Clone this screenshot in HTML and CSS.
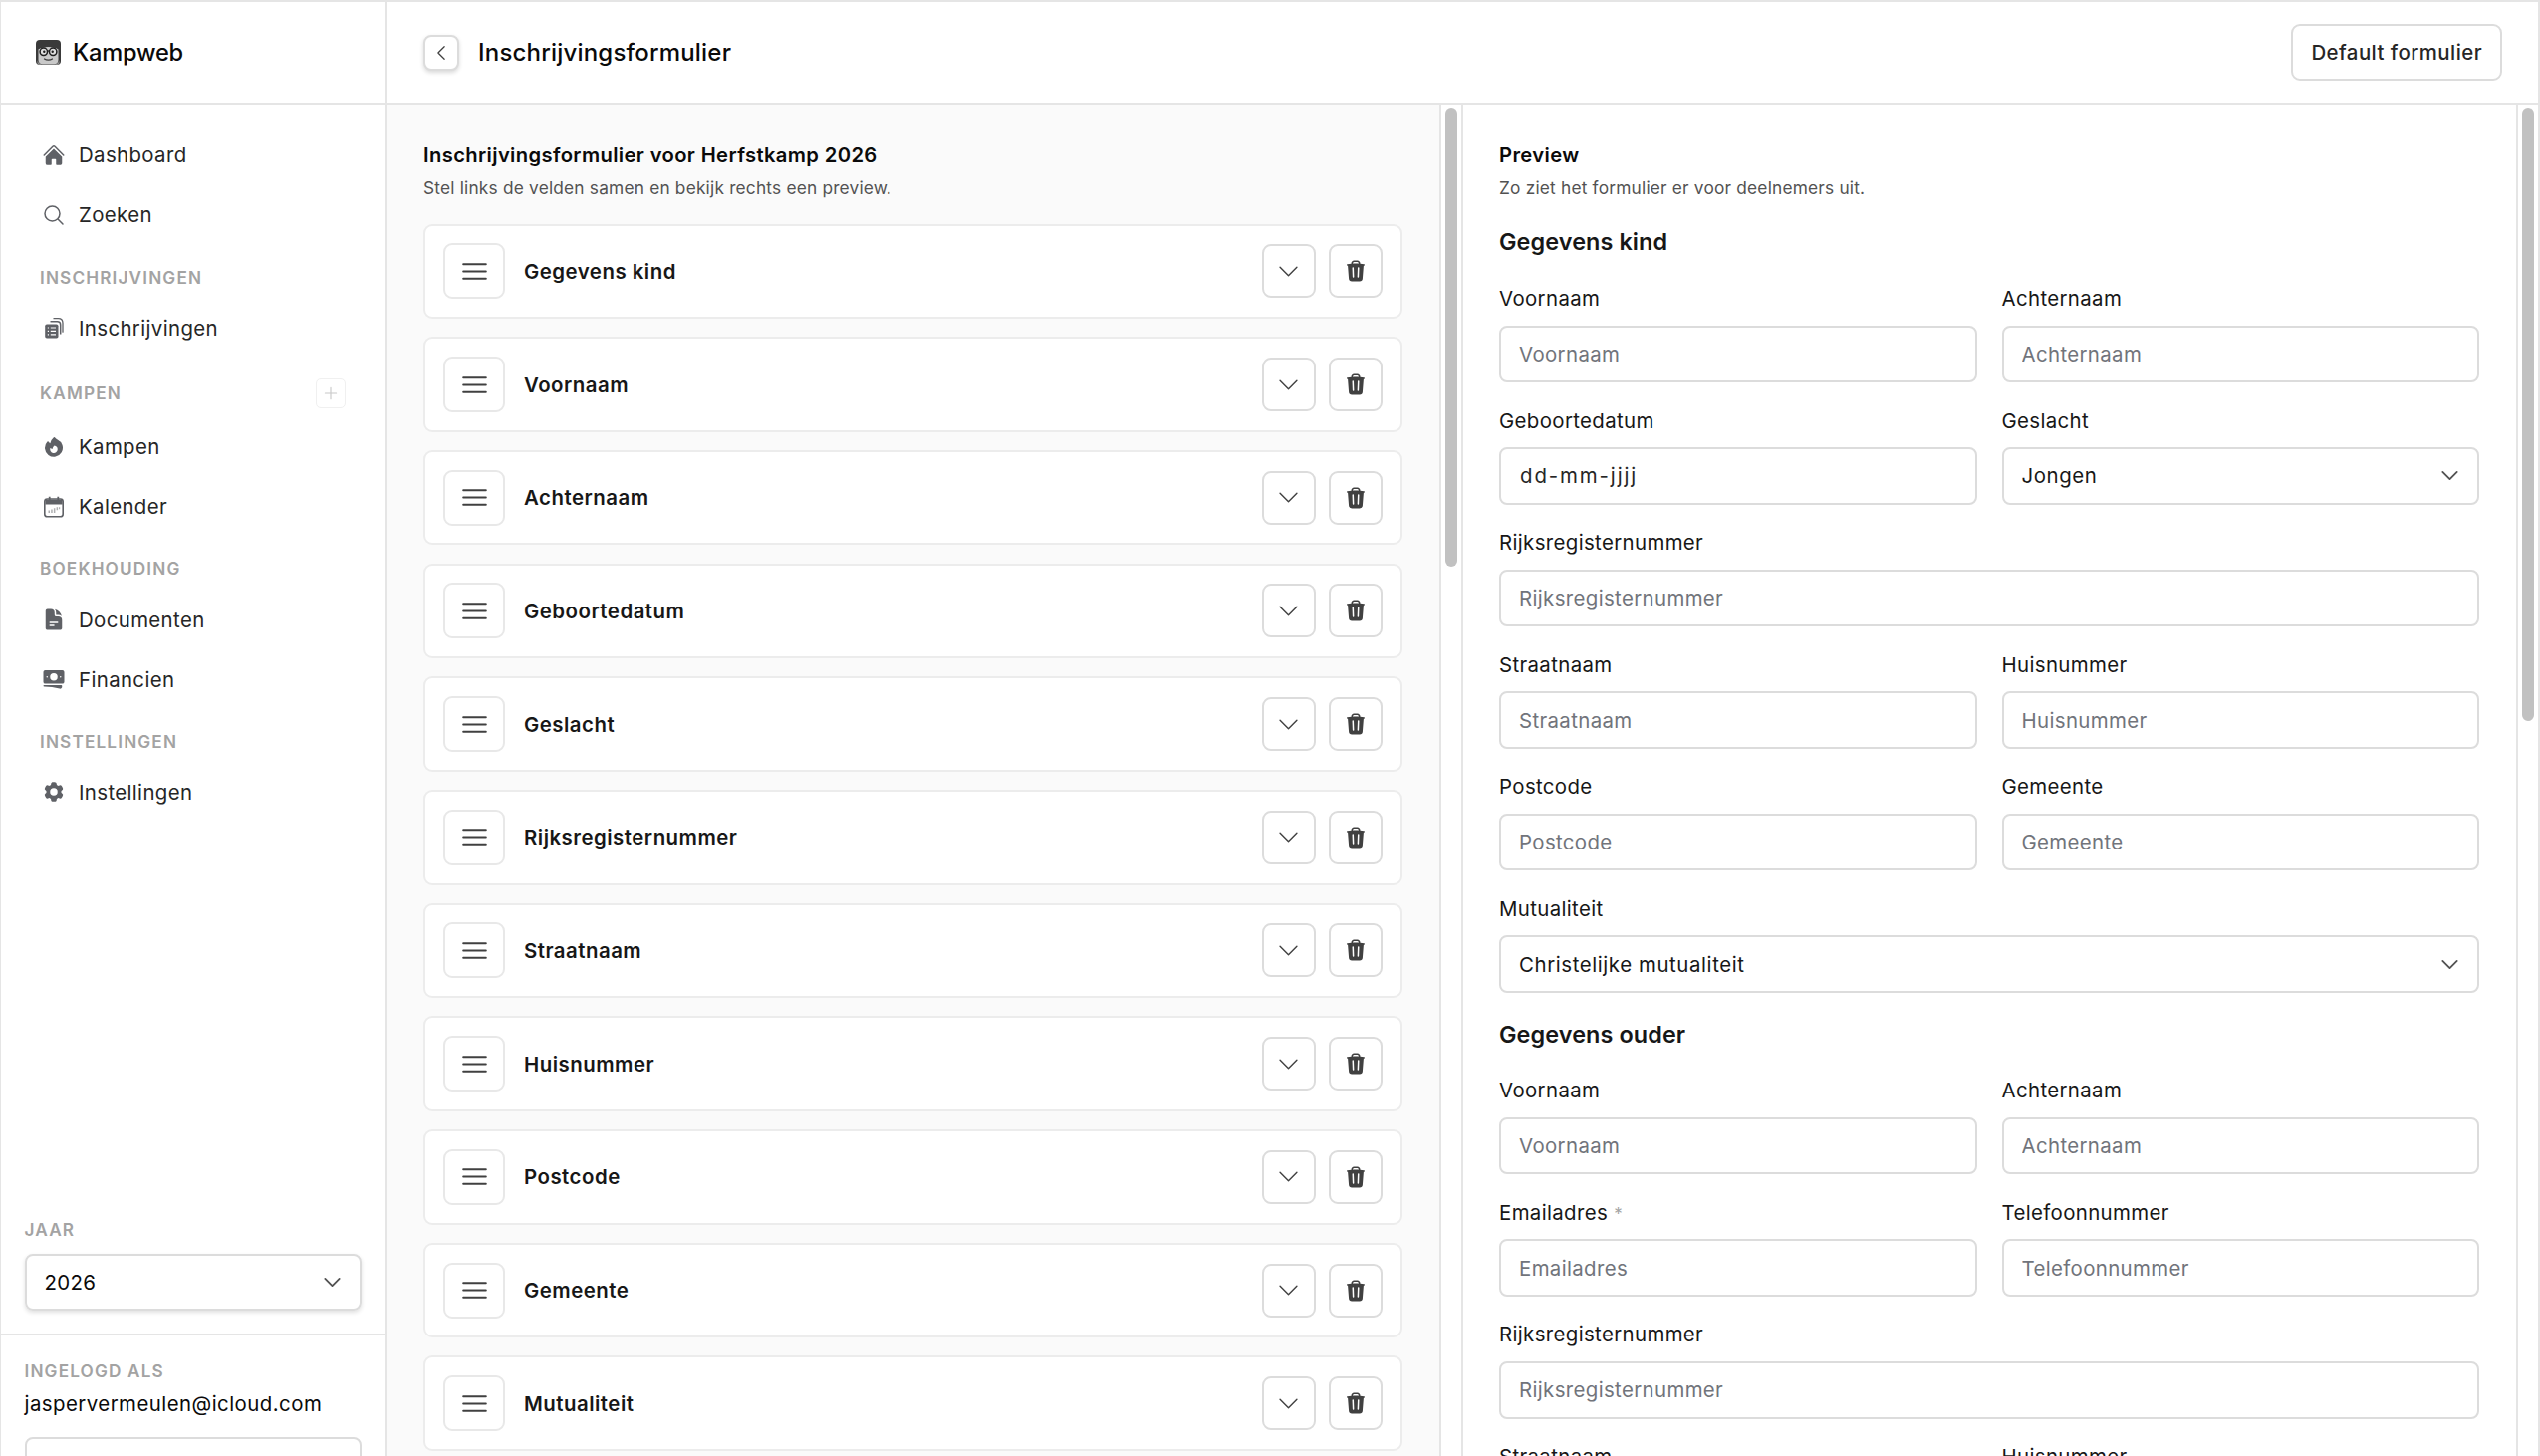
FILE: index.html
```html
<!DOCTYPE html>
<html lang="nl">
<head>
<meta charset="utf-8">
<title>Kampweb – Inschrijvingsformulier</title>
<link rel="stylesheet" href="styles.css">
</head>
<body>
<svg class="sprites" aria-hidden="true">
  <symbol id="i-chev-down" viewBox="0 0 24 24"><path d="m4.5 8.25 7.5 7.5 7.5-7.5" fill="none" stroke="currentColor" stroke-linecap="round" stroke-linejoin="round"/></symbol>
  <symbol id="i-trash" viewBox="0 0 24 24"><path fill="currentColor" fill-rule="evenodd" d="M16.5 4.478v.227a48.816 48.816 0 0 1 3.878.512.75.75 0 1 1-.256 1.478l-.209-.035-1.005 13.07a3 3 0 0 1-2.991 2.77H8.084a3 3 0 0 1-2.991-2.77L4.087 6.66l-.209.035a.75.75 0 0 1-.256-1.478A48.567 48.567 0 0 1 7.5 4.705v-.227c0-1.564 1.213-2.9 2.816-2.951a52.662 52.662 0 0 1 3.369 0c1.603.051 2.815 1.387 2.815 2.951Zm-6.136-1.452a51.196 51.196 0 0 1 3.273 0C14.39 3.05 15 3.684 15 4.478v.113a49.488 49.488 0 0 0-6 0v-.113c0-.794.609-1.428 1.364-1.452Zm-.355 5.945a.75.75 0 1 0-1.5.058l.347 9a.75.75 0 1 0 1.499-.058l-.346-9Zm5.48.058a.75.75 0 1 0-1.498-.058l-.347 9a.75.75 0 0 0 1.5.058l.345-9Z"/></symbol>
  <symbol id="i-bars" viewBox="0 0 24 24"><path d="M3.75 6.75h16.5M3.75 12h16.5M3.75 17.25h16.5" fill="none" stroke="currentColor" stroke-width="1.4" stroke-linecap="round"/></symbol>
</svg>
<div class="app">
  <aside class="sidebar">
    <div class="brand">
      <svg class="logo" viewBox="0 0 25 25" aria-hidden="true">
        <rect width="25" height="25" rx="4" fill="#3a3a3a"/>
        <path d="M2.5 9.5c2-1.500 5-2.400 10-2.400s8 .9 10 2.400v10.500c0 2.500-1.500 4-4 4.500h-12c-2.500-.5-4-2-4-4.500Z" fill="#c9c9c9"/>
        <path d="M1.500 20c.6 2.600 2 4 4.500 4.600h13c2.500-.6 3.900-2 4.500-4.600v3a2 2 0 0 1-2 2H3.500a2 2 0 0 1-2-2Z" fill="#8f8f8f"/>
        <circle cx="7.800" cy="11.800" r="3.700" fill="#dedede" stroke="#1f1f1f" stroke-width="1.500"/>
        <circle cx="17.200" cy="11.800" r="3.700" fill="#dedede" stroke="#1f1f1f" stroke-width="1.500"/>
        <path d="M11.400 11h2.200" stroke="#1f1f1f" stroke-width="1.300"/>
        <circle cx="8.300" cy="11.800" r="1.200" fill="#1f1f1f"/>
        <circle cx="16.700" cy="11.800" r="1.200" fill="#1f1f1f"/>
        <path d="M8.500 19c2 1.500 6 1.500 8 0" fill="none" stroke="#3a3a3a" stroke-width="1.200" stroke-linecap="round"/>
      </svg>
      <span class="brand-name">Kampweb</span>
    </div>
    <nav class="nav">
      <a class="nav-item">
        <svg class="nav-icon" viewBox="0 0 24 24"><path fill="currentColor" d="M11.47 3.841a.75.75 0 0 1 1.06 0l8.69 8.69a.75.75 0 1 0 1.06-1.061l-8.689-8.69a2.25 2.25 0 0 0-3.182 0l-8.69 8.69a.75.75 0 1 0 1.061 1.06l8.69-8.689Z"/><path fill="currentColor" d="m12 5.432 8.159 8.159c.03.03.06.058.091.086v6.198c0 1.035-.84 1.875-1.875 1.875H15a.75.75 0 0 1-.75-.75v-4.5a.75.75 0 0 0-.75-.75h-3a.75.75 0 0 0-.75.75V21a.75.75 0 0 1-.75.75H5.625a1.875 1.875 0 0 1-1.875-1.875v-6.198a2.29 2.29 0 0 0 .091-.086L12 5.432Z"/></svg>
        <span>Dashboard</span>
      </a>
      <a class="nav-item">
        <svg class="nav-icon" viewBox="0 0 24 24"><path d="m21 21-5.197-5.197m0 0A7.5 7.5 0 1 0 5.196 5.196a7.5 7.5 0 0 0 10.607 10.607Z" fill="none" stroke="currentColor" stroke-width="1.5" stroke-linecap="round" stroke-linejoin="round"/></svg>
        <span>Zoeken</span>
      </a>
      <div class="nav-label label-first">Inschrijvingen</div>
      <a class="nav-item">
        <svg class="nav-icon" viewBox="0 0 24 24"><path fill="none" stroke="currentColor" stroke-width="1.300" stroke-linecap="round" d="M12 2.700h4.500c2.700 0 4.500 1.800 4.500 4.500v9"/><path fill="none" stroke="currentColor" stroke-width="1.500" d="M8.500 5.800h7c2 0 3.200 1.200 3.200 3.200v9.500"/><rect x="3.200" y="8.500" width="13.300" height="14" rx="1.800" fill="currentColor"/><path d="M5.800 12h1.200M8.800 12h5.200M5.800 15.400h1.200M8.800 15.400h5.200M5.800 18.800h1.200M8.800 18.800h5.200" stroke="#fff" stroke-width="1.200"/></svg>
        <span>Inschrijvingen</span>
      </a>
      <div class="nav-label label-row">
        <span>Kampen</span>
        <span class="add-btn"><svg viewBox="0 0 24 24"><path d="M12 4.5v15m7.5-7.5h-15" fill="none" stroke="currentColor" stroke-width="1.5" stroke-linecap="round"/></svg></span>
      </div>
      <a class="nav-item">
        <svg class="nav-icon" viewBox="0 0 24 24"><path fill="currentColor" fill-rule="evenodd" d="M12.963 2.286a.75.75 0 0 0-1.071-.136 9.742 9.742 0 0 0-3.539 6.176 7.547 7.547 0 0 1-1.705-1.715.75.75 0 0 0-1.152-.082A9 9 0 1 0 15.68 4.534a7.46 7.46 0 0 1-2.717-2.248ZM15.750 14.250a3.750 3.750 0 1 1-7.313-1.172c.628.465 1.350.810 2.133 1a5.990 5.990 0 0 1 1.925-3.546 3.750 3.750 0 0 1 3.255 3.718Z"/></svg>
        <span>Kampen</span>
      </a>
      <a class="nav-item">
        <svg class="nav-icon" viewBox="0 0 24 24"><path fill="currentColor" d="M6.800 1.800h1.800v3.500H6.800zM15.400 1.800h1.800v3.500h-1.800z"/><rect x="2.800" y="4" width="18.400" height="17.800" rx="2.600" fill="none" stroke="currentColor" stroke-width="1.600"/><path fill="currentColor" d="M3.400 4.600h17.200V9.500H3.400z"/><path fill="currentColor" opacity=".5" d="M6.500 15.500h1.500v2.500H6.500zM9.200 14.500h1.500v3.500H9.200zM11.900 13.200h1.500v4.800h-1.500zM14.600 12.200h1.500v3h-1.500zM17 12.200h1.200v2H17z"/></svg>
        <span>Kalender</span>
      </a>
      <div class="nav-label">Boekhouding</div>
      <a class="nav-item">
        <svg class="nav-icon" viewBox="0 0 24 24"><path fill="currentColor" fill-rule="evenodd" d="M5.625 1.500c-1.036 0-1.875.840-1.875 1.875v17.250c0 1.035.840 1.875 1.875 1.875h12.750c1.035 0 1.875-.840 1.875-1.875V12.750A3.750 3.750 0 0 0 16.500 9h-1.875a1.875 1.875 0 0 1-1.875-1.875V5.250A3.750 3.750 0 0 0 9 1.500H5.625ZM7.500 15a.75.75 0 0 1 .75-.75h7.500a.75.75 0 0 1 0 1.500h-7.500A.75.75 0 0 1 7.500 15Zm.75 2.250a.75.75 0 0 0 0 1.500H12a.75.75 0 0 0 0-1.500H8.250Z"/><path fill="currentColor" d="M12.971 1.816A5.230 5.230 0 0 1 14.250 5.250v1.875c0 .207.168.375.375.375H16.500a5.230 5.230 0 0 1 3.434 1.279 9.768 9.768 0 0 0-6.963-6.963Z"/></svg>
        <span>Documenten</span>
      </a>
      <a class="nav-item">
        <svg class="nav-icon" viewBox="0 0 24 24"><path fill="currentColor" fill-rule="evenodd" d="M1.5 4.875C1.5 3.839 2.34 3 3.375 3h17.25c1.035 0 1.875.84 1.875 1.875v9.75c0 1.036-.84 1.875-1.875 1.875H3.375A1.875 1.875 0 0 1 1.5 14.625v-9.75ZM8.25 9.75a3.75 3.75 0 1 1 7.5 0 3.75 3.75 0 0 1-7.5 0ZM18.75 9a.75.75 0 0 0-.75.75v.008c0 .414.336.75.75.75h.008a.75.75 0 0 0 .75-.75V9.75a.75.75 0 0 0-.75-.75h-.008ZM4.5 9.75A.75.75 0 0 1 5.25 9h.008a.75.75 0 0 1 .75.75v.008a.75.75 0 0 1-.75.75H5.25a.75.75 0 0 1-.75-.75V9.75Z"/><path fill="currentColor" d="M2.25 18a.75.75 0 0 0 0 1.5c5.4 0 10.63.722 15.6 2.075 1.19.324 2.4-.558 2.4-1.82V18.75a.75.75 0 0 0-.75-.75H2.25Z"/></svg>
        <span>Financien</span>
      </a>
      <div class="nav-label">Instellingen</div>
      <a class="nav-item">
        <svg class="nav-icon" viewBox="0 0 24 24"><path fill="currentColor" fill-rule="evenodd" d="M11.078 2.25c-.917 0-1.699.663-1.85 1.567L9.05 4.889c-.02.12-.115.26-.297.348a7.493 7.493 0 0 0-.986.57c-.166.115-.334.126-.45.083L6.3 5.508a1.875 1.875 0 0 0-2.282.819l-.922 1.597a1.875 1.875 0 0 0 .432 2.385l.84.692c.095.078.17.229.154.43a7.598 7.598 0 0 0 0 1.139c.015.2-.059.352-.153.43l-.841.692a1.875 1.875 0 0 0-.432 2.385l.922 1.597a1.875 1.875 0 0 0 2.282.818l1.019-.382c.115-.043.283-.031.45.082.312.214.641.405.985.57.182.088.277.228.297.35l.178 1.071c.151.904.933 1.567 1.85 1.567h1.844c.916 0 1.699-.663 1.85-1.567l.178-1.072c.02-.12.114-.26.297-.349.344-.165.673-.356.985-.57.167-.114.335-.125.45-.082l1.02.382a1.875 1.875 0 0 0 2.28-.819l.923-1.597a1.875 1.875 0 0 0-.432-2.385l-.84-.692c-.095-.078-.17-.229-.154-.43a7.614 7.614 0 0 0 0-1.139c-.016-.2.059-.352.153-.43l.84-.692c.708-.582.891-1.59.433-2.385l-.922-1.597a1.875 1.875 0 0 0-2.282-.818l-1.02.382c-.114.043-.282.031-.449-.083a7.49 7.49 0 0 0-.985-.57c-.183-.087-.277-.227-.297-.348l-.179-1.072a1.875 1.875 0 0 0-1.85-1.567h-1.843ZM12 15.75a3.75 3.75 0 1 0 0-7.5 3.75 3.75 0 0 0 0 7.5Z"/></svg>
        <span>Instellingen</span>
      </a>
    </nav>
    <div class="year">
      <div class="small-label">Jaar</div>
      <div class="year-select"><span>2026</span><svg class="chev"><use href="#i-chev-down"/></svg></div>
    </div>
    <div class="account">
      <div class="small-label">Ingelogd als</div>
      <div class="email">jaspervermeulen@icloud.com</div>
      <div class="logout"></div>
    </div>
  </aside>
  <main class="main">
    <header class="topbar">
      <button class="back-btn"><svg viewBox="0 0 24 24"><path d="M15.75 19.5 8.25 12l7.5-7.5" fill="none" stroke="currentColor" stroke-width="1.5" stroke-linecap="round" stroke-linejoin="round"/></svg></button>
      <h1 class="page-title">Inschrijvingsformulier</h1>
      <button class="default-btn">Default formulier</button>
    </header>
    <div class="panes">
      <section class="pane pane-editor">
        <div class="pane-scroll editor-scroll">
          <h2 class="pane-title">Inschrijvingsformulier voor Herfstkamp 2026</h2>
          <p class="pane-sub">Stel links de velden samen en bekijk rechts een preview.</p>
          <div class="field-list">
            <div class="field-row"><span class="icon-btn handle"><svg><use href="#i-bars"/></svg></span><span class="field-name">Gegevens kind</span><span class="icon-btn"><svg class="chev"><use href="#i-chev-down"/></svg></span><span class="icon-btn"><svg class="trash"><use href="#i-trash"/></svg></span></div>
            <div class="field-row"><span class="icon-btn handle"><svg><use href="#i-bars"/></svg></span><span class="field-name">Voornaam</span><span class="icon-btn"><svg class="chev"><use href="#i-chev-down"/></svg></span><span class="icon-btn"><svg class="trash"><use href="#i-trash"/></svg></span></div>
            <div class="field-row"><span class="icon-btn handle"><svg><use href="#i-bars"/></svg></span><span class="field-name">Achternaam</span><span class="icon-btn"><svg class="chev"><use href="#i-chev-down"/></svg></span><span class="icon-btn"><svg class="trash"><use href="#i-trash"/></svg></span></div>
            <div class="field-row"><span class="icon-btn handle"><svg><use href="#i-bars"/></svg></span><span class="field-name">Geboortedatum</span><span class="icon-btn"><svg class="chev"><use href="#i-chev-down"/></svg></span><span class="icon-btn"><svg class="trash"><use href="#i-trash"/></svg></span></div>
            <div class="field-row"><span class="icon-btn handle"><svg><use href="#i-bars"/></svg></span><span class="field-name">Geslacht</span><span class="icon-btn"><svg class="chev"><use href="#i-chev-down"/></svg></span><span class="icon-btn"><svg class="trash"><use href="#i-trash"/></svg></span></div>
            <div class="field-row"><span class="icon-btn handle"><svg><use href="#i-bars"/></svg></span><span class="field-name">Rijksregisternummer</span><span class="icon-btn"><svg class="chev"><use href="#i-chev-down"/></svg></span><span class="icon-btn"><svg class="trash"><use href="#i-trash"/></svg></span></div>
            <div class="field-row"><span class="icon-btn handle"><svg><use href="#i-bars"/></svg></span><span class="field-name">Straatnaam</span><span class="icon-btn"><svg class="chev"><use href="#i-chev-down"/></svg></span><span class="icon-btn"><svg class="trash"><use href="#i-trash"/></svg></span></div>
            <div class="field-row"><span class="icon-btn handle"><svg><use href="#i-bars"/></svg></span><span class="field-name">Huisnummer</span><span class="icon-btn"><svg class="chev"><use href="#i-chev-down"/></svg></span><span class="icon-btn"><svg class="trash"><use href="#i-trash"/></svg></span></div>
            <div class="field-row"><span class="icon-btn handle"><svg><use href="#i-bars"/></svg></span><span class="field-name">Postcode</span><span class="icon-btn"><svg class="chev"><use href="#i-chev-down"/></svg></span><span class="icon-btn"><svg class="trash"><use href="#i-trash"/></svg></span></div>
            <div class="field-row"><span class="icon-btn handle"><svg><use href="#i-bars"/></svg></span><span class="field-name">Gemeente</span><span class="icon-btn"><svg class="chev"><use href="#i-chev-down"/></svg></span><span class="icon-btn"><svg class="trash"><use href="#i-trash"/></svg></span></div>
            <div class="field-row"><span class="icon-btn handle"><svg><use href="#i-bars"/></svg></span><span class="field-name">Mutualiteit</span><span class="icon-btn"><svg class="chev"><use href="#i-chev-down"/></svg></span><span class="icon-btn"><svg class="trash"><use href="#i-trash"/></svg></span></div>
          </div>
        </div>
        <div class="scroll-track"><div class="scroll-thumb thumb-editor"></div></div>
      </section>
      <section class="pane pane-preview">
        <div class="pane-scroll preview-scroll">
          <h2 class="pane-title">Preview</h2>
          <p class="pane-sub">Zo ziet het formulier er voor deelnemers uit.</p>
          <h3 class="group-title">Gegevens kind</h3>
          <div class="form-grid">
            <label class="field"><span class="field-label">Voornaam</span><input class="control" placeholder="Voornaam"></label>
            <label class="field"><span class="field-label">Achternaam</span><input class="control" placeholder="Achternaam"></label>
            <label class="field"><span class="field-label">Geboortedatum</span><input class="control date" value="dd-mm-jjjj"></label>
            <div class="field"><span class="field-label">Geslacht</span><div class="control select"><span>Jongen</span><svg class="chev"><use href="#i-chev-down"/></svg></div></div>
            <label class="field wide"><span class="field-label">Rijksregisternummer</span><input class="control" placeholder="Rijksregisternummer"></label>
            <label class="field"><span class="field-label">Straatnaam</span><input class="control" placeholder="Straatnaam"></label>
            <label class="field"><span class="field-label">Huisnummer</span><input class="control" placeholder="Huisnummer"></label>
            <label class="field"><span class="field-label">Postcode</span><input class="control" placeholder="Postcode"></label>
            <label class="field"><span class="field-label">Gemeente</span><input class="control" placeholder="Gemeente"></label>
            <div class="field wide"><span class="field-label">Mutualiteit</span><div class="control select"><span>Christelijke mutualiteit</span><svg class="chev"><use href="#i-chev-down"/></svg></div></div>
          </div>
          <h3 class="group-title group-next">Gegevens ouder</h3>
          <div class="form-grid">
            <label class="field"><span class="field-label">Voornaam</span><input class="control" placeholder="Voornaam"></label>
            <label class="field"><span class="field-label">Achternaam</span><input class="control" placeholder="Achternaam"></label>
            <label class="field"><span class="field-label">Emailadres <span class="req">*</span></span><input class="control" placeholder="Emailadres"></label>
            <label class="field"><span class="field-label">Telefoonnummer</span><input class="control" placeholder="Telefoonnummer"></label>
            <label class="field wide"><span class="field-label">Rijksregisternummer</span><input class="control" placeholder="Rijksregisternummer"></label>
            <label class="field"><span class="field-label">Straatnaam</span><input class="control" placeholder="Straatnaam"></label>
            <label class="field"><span class="field-label">Huisnummer</span><input class="control" placeholder="Huisnummer"></label>
          </div>
        </div>
        <div class="scroll-track"><div class="scroll-thumb thumb-preview"></div></div>
      </section>
    </div>
  </main>
</div>
</body>
</html>
```
FILE: styles.css
```css
* { box-sizing: border-box; }
html, body { margin: 0; height: 100%; overflow: hidden; background: #fff; }
body { font-family: "Inter", "Liberation Sans", sans-serif; color: #171717; font-size: 20.4px; letter-spacing: 0.37px; }
.sprites { display: none; }
h1, h2, h3, p { margin: 0; }
button { font: inherit; letter-spacing: inherit; color: inherit; background: #fff; cursor: pointer; }

.app { display: flex; height: 1462px; border-style: solid; border-color: #e5e5e5; border-width: 2px 2px 0 1px; }

/* Sidebar */
.sidebar { width: 388px; flex: none; display: flex; flex-direction: column; border-right: 2px solid #e5e5e5; overflow: hidden; }
.brand { height: 103px; flex: none; display: flex; align-items: center; gap: 12px; padding-left: 35px; border-bottom: 2px solid #e5e5e5; }
.logo { width: 25px; height: 25px; flex: none; }
.brand-name { font-size: 23.6px; font-weight: 500; letter-spacing: -0.2px; color: #0a0a0a; }
.nav { flex: 1; padding: 20.5px 0 0 15px; display: flex; flex-direction: column; }
.nav-item { display: flex; align-items: center; gap: 13px; height: 60px; flex: none; padding-left: 26px; color: #262626; }
.nav-icon { width: 24px; height: 24px; flex: none; color: #5f6166; }
.nav-label { font-size: 17.2px; font-weight: 600; letter-spacing: 1.15px; color: #a3a3a3; text-transform: uppercase; padding-left: 24px; margin: 17.6px 0 5.7px; height: 30px; line-height: 30px; flex: none; }
.label-first { margin-top: 18px; }
.label-row { display: flex; align-items: center; justify-content: space-between; padding-right: 40px; margin-top: 21.2px; margin-bottom: 8.4px; }
.add-btn { width: 30px; height: 30px; border: 1px solid #f0f0f0; border-radius: 5px; display: flex; align-items: center; justify-content: center; color: #c8c8c8; }
.add-btn svg { width: 18px; height: 18px; }
.small-label { font-size: 17.2px; font-weight: 600; letter-spacing: 1.15px; color: #a3a3a3; text-transform: uppercase; line-height: 24px; }
.year { padding: 0 24px 22.6px 23.5px; flex: none; }
.year-select { margin-top: 11.6px; height: 57.6px; border: 2px solid #dcdcdc; border-radius: 8px; display: flex; align-items: center; justify-content: space-between; padding: 0 16px 0 18px; box-shadow: 0 2px 4px rgba(0,0,0,.12); color: #0a0a0a; }
.chev { width: 23px; height: 23px; color: #525252; flex: none; stroke-width: 1.9; }
.account { padding: 24px 24px 0 23.5px; flex: none; border-top: 2px solid #e5e5e5; height: 123px; }
.email { margin-top: 6.4px; color: #0a0a0a; line-height: 30px; letter-spacing: 0.46px; }
.logout { margin-top: 17.2px; height: 56px; border: 2px solid #dcdcdc; border-radius: 8px; }

/* Main */
.main { flex: 1; min-width: 0; display: flex; flex-direction: column; }
.topbar { height: 103px; flex: none; display: flex; align-items: center; padding: 0 36px; border-bottom: 2px solid #e5e5e5; }
.back-btn { width: 36px; height: 36px; padding: 0; border: 2px solid #dcdcdc; border-radius: 8px; box-shadow: 0 2px 4px rgba(0,0,0,.15); display: flex; align-items: center; justify-content: center; color: #404040; flex: none; }
.back-btn svg { width: 20px; height: 20px; }
.page-title { font-size: 24px; font-weight: 500; letter-spacing: 0.2px; margin-left: 19px; flex: 1; color: #0a0a0a; }
.default-btn { height: 57px; padding: 0 18px; border: 2px solid #dcdcdc; border-radius: 9px; font-weight: 500; letter-spacing: 0.45px; color: #262626; }

.panes { flex: 1; min-height: 0; display: flex; }
.pane { display: flex; min-width: 0; overflow: hidden; }
.pane-editor { width: 1078px; flex: none; background: #fafafa; }
.pane-preview { flex: 1; background: #fff; border-left: 2px solid #e5e5e5; }
.pane-scroll { flex: 1; min-width: 0; overflow: hidden; }
.editor-scroll { padding: 36.8px 37px 0 36px; }
.preview-scroll { padding: 36.8px 37px 0 36px; }
.scroll-track { width: 22px; flex: none; border-left: 2px solid #e5e5e5; background: #fff; padding: 3px 0 0 4px; }
.scroll-thumb { width: 12px; border-radius: 6px; background: #c1c1c1; }
.thumb-editor { height: 461px; }
.thumb-preview { height: 616px; }

.pane-title { font-size: 20.2px; font-weight: 600; line-height: 28px; color: #0a0a0a; }
.pane-sub { font-size: 17.3px; line-height: 26px; margin-top: 6px; color: #525252; letter-spacing: 0.2px; }

/* Field rows */
.field-list { display: flex; flex-direction: column; gap: 18.2px; margin-top: 22.8px; }
.field-row { height: 95.5px; flex: none; display: flex; align-items: center; gap: 13px; padding: 0 18.5px 0 18px; background: #fff; border: 2px solid #ececec; border-radius: 9px; }
.icon-btn { width: 54px; height: 54px; flex: none; display: flex; align-items: center; justify-content: center; border: 2px solid #dcdcdc; border-radius: 9px; background: #fff; }
.icon-btn svg { width: 33px; height: 33px; color: #404040; }
.icon-btn .chev { width: 27px; height: 27px; stroke-width: 1.25; color: #404040; }
.icon-btn .trash { width: 24px; height: 24px; color: #404040; }
.handle { width: 62px; height: 56px; border-color: #e8e8e8; }
.field-name { flex: 1; font-weight: 600; margin-left: 6px; color: #171717; letter-spacing: 0.5px; }

/* Preview form */
.group-title { font-size: 23.4px; font-weight: 600; line-height: 32px; margin-top: 25.2px; letter-spacing: 0.1px; color: #171717; }
.group-next { margin-top: 26px; }
.form-grid { display: grid; grid-template-columns: 1fr 1fr; column-gap: 25px; row-gap: 22.4px; margin-top: 25px; }
.group-next + .form-grid { margin-top: 24.2px; }
.field { display: flex; flex-direction: column; gap: 10.6px; min-width: 0; }
.wide { grid-column: 1 / -1; }
.field-label { line-height: 32px; height: 32px; color: #171717; }
.req { color: #a3a3a3; font-size: 17px; }
.control { width: 100%; height: 57.6px; border: 2px solid #dcdcdc; border-radius: 8px; padding: 0 18px; font: inherit; letter-spacing: inherit; color: #171717; background: #fff; outline: none; }
.control::placeholder { color: #71747b; opacity: 1; }
.date { letter-spacing: 1.9px; padding-left: 19px; color: #262626; }
.select { display: flex; align-items: center; justify-content: space-between; letter-spacing: 0.6px; padding-right: 16px; }
```
